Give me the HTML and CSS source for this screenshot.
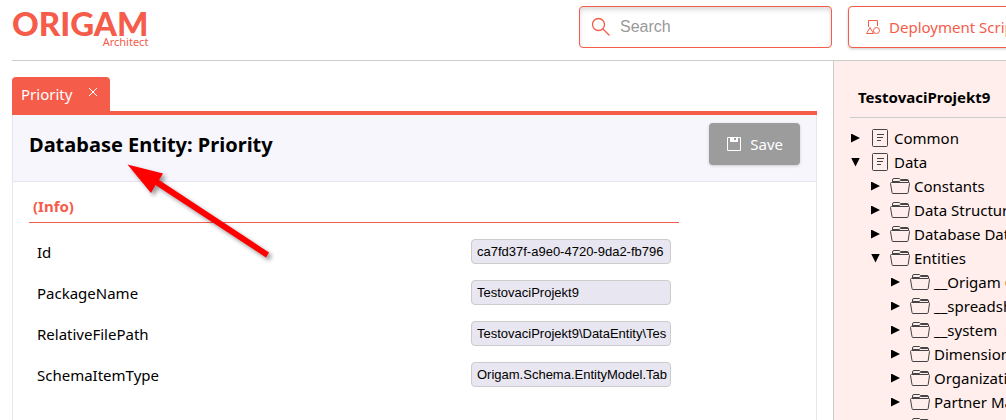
FILE: index.html
```html
<!DOCTYPE html>
<html lang="en">
<head>
<meta charset="utf-8">
<title>Origam Architect</title>
<link rel="stylesheet" href="styles.css">
</head>
<body>
<svg class="symbols" aria-hidden="true">
  <symbol id="folder" viewBox="0 0 20 18"><path d="M2 15.500 .5 6.500Q.5 5.500 1.500 5.500H18.500Q19.600 5.500 19.500 6.500L18.200 15.500Q18 16.500 17 16.500H3Q2 16.500 2 15.500ZM2.500 5.500V3Q2.500 1.500 4 1.500H9.500L10.500 2.500H17Q18.500 2.500 18.500 4V5.500M3 4.500H9L10.500 3.500H18"/></symbol>
  <symbol id="package" viewBox="0 0 16 18"><path d="M.5 1.500Q.5.500 1.500.500H14.500Q15.500.500 15.500 1.500V16.500Q15.500 17.500 14.500 17.500H1.500Q.5 17.500 .5 16.500ZM5 5.500H12M5 8.500H11M5 11.500H9"/></symbol>
</svg>
<div class="app">
  <header class="topbar">
    <div class="logo"><span class="logo-name">ORIGAM</span><span class="logo-sub">Architect</span></div>
    <label class="search">
      <svg class="search-icon" viewBox="0 0 20 20" aria-hidden="true"><circle cx="7.500" cy="7.500" r="6"/><path d="M12 12 18.500 18.500"/></svg>
      <input class="search-input" type="search" placeholder="Search" aria-label="Search">
    </label>
    <button class="deploy" type="button">
      <svg class="deploy-icon" viewBox="0 0 14 14" aria-hidden="true"><path d="M2.500 7V.500H11.500V6M.500 13.500H7.500L4 7.500Z"/><circle cx="10.500" cy="10.500" r="3"/></svg>
      Deployment Scripts
    </button>
  </header>
  <div class="workspace">
    <main class="editor">
      <div class="tabs">
        <div class="tab"><span>Priority</span><button class="tab-close" type="button" aria-label="Close"><svg viewBox="0 0 10 10"><path d="M1 1 9 9M9 1 1 9"/></svg></button></div>
      </div>
      <section class="panel">
        <div class="panel-head">
          <h1 class="panel-title">Database Entity: Priority</h1>
          <button class="save" type="button"><svg class="save-icon" viewBox="0 0 14 14" aria-hidden="true"><path d="M.500.500H13.500V13.500H.500Z"/><path class="solid" d="M3 0H11V5H3ZM7 1V3H9V1Z" fill-rule="evenodd"/></svg>Save</button>
        </div>
        <form class="form">
          <h2 class="form-title">(Info)</h2>
          <div class="field"><label for="id">Id</label><input id="id" type="text" readonly value="ca7fd37f-a9e0-4720-9da2-fb796"></div>
          <div class="field"><label for="pkg">PackageName</label><input id="pkg" type="text" readonly value="TestovaciProjekt9"></div>
          <div class="field"><label for="path">RelativeFilePath</label><input id="path" type="text" readonly value="TestovaciProjekt9\DataEntity\Tes"></div>
          <div class="field"><label for="type">SchemaItemType</label><input id="type" type="text" readonly value="Origam.Schema.EntityModel.Tab"></div>
        </form>
      </section>
    </main>
    <aside class="sidebar">
      <h2 class="project">TestovaciProjekt9</h2>
      <ul class="tree">
        <li><div class="node"><button class="toggle" type="button" aria-label="Expand"></button><svg class="package"><use href="#package"/></svg>Common</div></li>
        <li><div class="node"><button class="toggle open" type="button" aria-label="Collapse"></button><svg class="package"><use href="#package"/></svg>Data</div>
          <ul>
            <li><div class="node"><button class="toggle" type="button" aria-label="Expand"></button><svg class="folder"><use href="#folder"/></svg>Constants</div></li>
            <li><div class="node"><button class="toggle" type="button" aria-label="Expand"></button><svg class="folder"><use href="#folder"/></svg>Data Structures</div></li>
            <li><div class="node"><button class="toggle" type="button" aria-label="Expand"></button><svg class="folder"><use href="#folder"/></svg>Database Data Types</div></li>
            <li><div class="node"><button class="toggle open" type="button" aria-label="Collapse"></button><svg class="folder"><use href="#folder"/></svg>Entities</div>
              <ul>
                <li><div class="node"><button class="toggle" type="button" aria-label="Expand"></button><svg class="folder"><use href="#folder"/></svg>__Origam Core</div></li>
                <li><div class="node"><button class="toggle" type="button" aria-label="Expand"></button><svg class="folder"><use href="#folder"/></svg>__spreadsheet</div></li>
                <li><div class="node"><button class="toggle" type="button" aria-label="Expand"></button><svg class="folder"><use href="#folder"/></svg>__system</div></li>
                <li><div class="node"><button class="toggle" type="button" aria-label="Expand"></button><svg class="folder"><use href="#folder"/></svg>Dimensions</div></li>
                <li><div class="node"><button class="toggle" type="button" aria-label="Expand"></button><svg class="folder"><use href="#folder"/></svg>Organization</div></li>
                <li><div class="node"><button class="toggle" type="button" aria-label="Expand"></button><svg class="folder"><use href="#folder"/></svg>Partner Management</div></li>
                <li><div class="node"><span class="toggle-space"></span><svg class="folder"><use href="#folder"/></svg></div></li>
              </ul>
            </li>
          </ul>
        </li>
      </ul>
    </aside>
  </div>
</div>
<svg class="arrow" viewBox="0 0 150 100" aria-hidden="true"><path d="M.500.500 36 9.500 32 16 142 88.500 139 93.500 28.500 21 24 29Z"/></svg>
</body>
</html>
```
FILE: styles.css
```css
* { box-sizing: border-box; }
body {
  margin: 0;
  background: #fff;
  color: #000;
  font: 15px/24px "Noto Sans", "Open Sans", sans-serif;
}
h1, h2, ul { margin: 0; padding: 0; }
ul { list-style: none; }
button { font: inherit; cursor: pointer; }
svg { display: block; flex: none; fill: none; stroke: currentColor; }
.symbols { position: absolute; width: 0; height: 0; }

.app { display: flex; flex-direction: column; height: 100vh; overflow: hidden; }
.topbar {
  display: grid;
  grid-template-columns: 1fr 253px 158px;
  gap: 16px;
  flex: none;
  margin-left: 12px;
  padding: 6px 0 12px;
  border-bottom: 1px solid #ccc;
}
.logo { display: flex; flex-direction: column; justify-self: start; padding-top: 5px; color: #f55c4a; }
.logo-name { font: 900 33px/25px Lato, sans-serif; }
.logo-sub { align-self: flex-end; font-size: 11px; line-height: 12px; }
.search {
  display: flex;
  align-items: center;
  gap: 9px;
  height: 42px;
  padding: 0 11px;
  border: 1px solid #f55c4a;
  border-radius: 4px;
  box-shadow: inset 0 3px 5px #ddd;
}
.search-icon { width: 20px; height: 20px; color: #f55c4a; stroke-width: 1.3; }
.search-input {
  flex: 1;
  min-width: 0;
  padding: 0;
  border: 0;
  outline: 0;
  background: none;
  font: 16px/20px "Liberation Sans", Arial, sans-serif;
}
.search-input::placeholder { color: #999; }
.deploy {
  display: flex;
  align-items: center;
  gap: 9px;
  width: 200px;
  height: 42px;
  padding: 0 17px;
  border: 1px solid #f55c4a;
  border-radius: 4px;
  background: #fff;
  box-shadow: 0 1px 3px #ccc;
  color: #f55c4a;
  white-space: nowrap;
}
.deploy-icon { width: 14px; height: 14px; }

.workspace { display: flex; flex: 1; min-height: 0; }
.editor { display: flex; flex-direction: column; flex: 1; min-width: 0; padding: 16px 16px 0 12px; }
.tabs { display: flex; border-bottom: 4px solid #f55c4a; border-radius: 0 2px 0 0; }
.tab {
  display: flex;
  gap: 16px;
  height: 34px;
  padding: 5px 12px 5px 9px;
  border-radius: 4px 4px 0 0;
  background: #f55c4a;
  color: #fff;
}
.tab-close { align-self: flex-start; padding: 5px 0; border: 0; background: none; color: #fff; }
.tab-close svg { width: 10px; height: 10px; }
.panel { flex: 1; border: solid #e6e5ef; border-width: 0 1px; }
.panel-head {
  display: flex;
  align-items: flex-start;
  justify-content: space-between;
  padding: 8px 16px 16px;
  border-bottom: 1px solid #e6e5ef;
  background: #f7f6fc;
}
.panel-title { padding-top: 9px; font-size: 20px; line-height: 26px; }
.save {
  display: flex;
  align-items: center;
  gap: 9px;
  height: 42px;
  padding: 0 17px 0 18px;
  border: 0;
  border-radius: 4px;
  background: #9c9c9c;
  box-shadow: 0 1px 3px #ccc;
  color: #fff;
}
.save-icon { width: 14px; height: 14px; }
.solid { fill: #fff; stroke: none; }
.form { max-width: 682px; padding: 12px 16px; }
.form-title {
  margin-bottom: 16px;
  padding: 0 4px 4px;
  border-bottom: 1px solid #f55c4a;
  color: #f55c4a;
  font-size: 15px;
}
.field { display: flex; align-items: center; justify-content: space-between; height: 25px; margin-bottom: 16px; padding: 0 8px; }
.field input {
  width: 200px;
  height: 25px;
  padding: 0 2px 0 5px;
  border: 1px solid #ccc;
  border-radius: 4px;
  background: #e8e6f0;
  font: 13px/20px "Liberation Sans", Arial, sans-serif;
}

.sidebar {
  flex: 0 0 173px;
  overflow: hidden;
  padding: 24px 0 0 16px;
  border-left: 1px solid #ccc;
  background: #ffeeeb;
  white-space: nowrap;
}
.project { padding: 0 8px 8px; border-bottom: 1px solid #ccc; font-size: 15px; }
.tree { padding-top: 8px; }
.tree ul { padding-left: 20px; }
.node { display: flex; align-items: center; height: 24px; }
.toggle, .toggle-space { flex: none; width: 20px; height: 24px; padding: 0; border: 0; background: none; }
.toggle::before {
  content: "";
  display: block;
  width: 9px;
  height: 9px;
  margin-left: 1px;
  background: #000;
  clip-path: polygon(0 0, 100% 50%, 0 100%);
}
.toggle.open::before { clip-path: polygon(0 0, 100% 0, 50% 100%); }
.package { width: 16px; height: 18px; margin: 0 6px 0 2px; color: #444; }
.folder { width: 20px; height: 18px; margin-right: 4px; color: #444; }

.arrow {
  position: absolute;
  top: 164px;
  left: 127px;
  width: 150px;
  height: 100px;
  pointer-events: none;
  filter: drop-shadow(3px 3px 2px #0006);
}
.arrow path { fill: #f00; stroke: none; }
```
